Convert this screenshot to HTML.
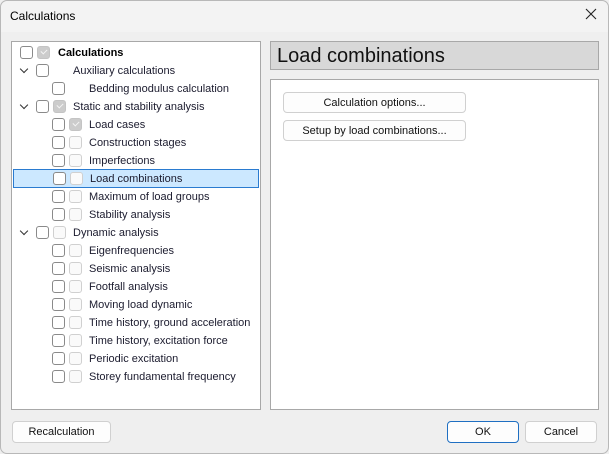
<!DOCTYPE html><html><head><style>
*{box-sizing:border-box;margin:0;padding:0}
body{width:609px;height:454px;background:#efefef;font-family:"Liberation Sans",sans-serif;font-size:11px;color:#1b1b2e;position:relative;overflow:hidden}
.frame{position:absolute;left:0;top:0;width:609px;height:454px;border:1px solid #b8b8b8;border-radius:7px}
.tb{position:absolute;left:1px;top:1px;width:607px;height:31px;background:#f3f3f3;border-radius:7px 7px 0 0}
.title{position:absolute;left:10px;top:9px;font-size:12px;color:#000}
.x{position:absolute;left:585px;top:8px}
.lp{position:absolute;left:11px;top:41px;width:250px;height:369px;background:#fff;border:1px solid #a8a8a8}
.hd{position:absolute;left:270px;top:41px;width:329px;height:29px;background:#d8d8d8;border:1px solid #a8a8a8;font-size:20px;color:#111;padding:3px 0 0 6px}
.rp{position:absolute;left:270px;top:79px;width:329px;height:331px;background:#fff;border:1px solid #a8a8a8}
.btn{position:absolute;background:#fdfdfd;border:1px solid #d0d0d0;border-radius:4px;text-align:center;font-size:11px;color:#111}
.row{position:absolute;left:0;height:18px;width:248px}
.cb{position:absolute;top:3px;width:13px;height:13px;border:1px solid #8a8a8a;border-radius:3px;background:#fff}
.cb2{position:absolute;top:3px;width:13px;height:13px;border:1px solid #d0d0d0;border-radius:3px;background:#fafafa}
.cb2.c{background:#ccc;border-color:#c4c4c4}
.cb2.c::after{content:"";position:absolute;left:3px;top:2px;width:5px;height:3px;border-left:1px solid #f4f4f4;border-bottom:1px solid #f4f4f4;transform:rotate(-45deg)}
.t{position:absolute;top:4px;white-space:nowrap}
.chev{position:absolute;top:5px;left:9px;width:6px;height:6px;border-right:1.3px solid #333;border-bottom:1.3px solid #333;transform:rotate(45deg)}
.sel{background:#cce8ff;border:1px solid #2a7bd0}
</style></head><body>
<div class="frame"></div>
<div class="tb"></div>
<div class="title">Calculations</div>
<svg class="x" width="12" height="12" viewBox="0 0 12 12"><path d="M1 1L11 11M11 1L1 11" stroke="#222" stroke-width="1.1"/></svg>
<div class="lp">
<div class="row" style="top:1px"><div class="cb" style="left:8px"></div><div class="cb2 c" style="left:25px"></div><div class="t" style="left:46px;font-weight:bold;color:#000">Calculations</div></div>
<div class="row" style="top:19px"><div class="chev"></div><div class="cb" style="left:24px"></div><div class="t" style="left:61px">Auxiliary calculations</div></div>
<div class="row" style="top:37px"><div class="cb" style="left:40px"></div><div class="t" style="left:77px">Bedding modulus calculation</div></div>
<div class="row" style="top:55px"><div class="chev"></div><div class="cb" style="left:24px"></div><div class="cb2 c" style="left:41px"></div><div class="t" style="left:61px">Static and stability analysis</div></div>
<div class="row" style="top:73px"><div class="cb" style="left:40px"></div><div class="cb2 c" style="left:57px"></div><div class="t" style="left:77px">Load cases</div></div>
<div class="row" style="top:91px"><div class="cb" style="left:40px"></div><div class="cb2" style="left:57px"></div><div class="t" style="left:77px">Construction stages</div></div>
<div class="row" style="top:109px"><div class="cb" style="left:40px"></div><div class="cb2" style="left:57px"></div><div class="t" style="left:77px">Imperfections</div></div>
<div class="row sel" style="top:127px;left:1px;width:246px;height:19px"><div class="cb" style="left:39px;top:2px"></div><div class="cb2" style="left:56px;top:2px"></div><div class="t" style="left:76px;top:3px">Load combinations</div></div>
<div class="row" style="top:145px"><div class="cb" style="left:40px"></div><div class="cb2" style="left:57px"></div><div class="t" style="left:77px">Maximum of load groups</div></div>
<div class="row" style="top:163px"><div class="cb" style="left:40px"></div><div class="cb2" style="left:57px"></div><div class="t" style="left:77px">Stability analysis</div></div>
<div class="row" style="top:181px"><div class="chev"></div><div class="cb" style="left:24px"></div><div class="cb2" style="left:41px"></div><div class="t" style="left:61px">Dynamic analysis</div></div>
<div class="row" style="top:199px"><div class="cb" style="left:40px"></div><div class="cb2" style="left:57px"></div><div class="t" style="left:77px">Eigenfrequencies</div></div>
<div class="row" style="top:217px"><div class="cb" style="left:40px"></div><div class="cb2" style="left:57px"></div><div class="t" style="left:77px">Seismic analysis</div></div>
<div class="row" style="top:235px"><div class="cb" style="left:40px"></div><div class="cb2" style="left:57px"></div><div class="t" style="left:77px">Footfall analysis</div></div>
<div class="row" style="top:253px"><div class="cb" style="left:40px"></div><div class="cb2" style="left:57px"></div><div class="t" style="left:77px">Moving load dynamic</div></div>
<div class="row" style="top:271px"><div class="cb" style="left:40px"></div><div class="cb2" style="left:57px"></div><div class="t" style="left:77px">Time history, ground acceleration</div></div>
<div class="row" style="top:289px"><div class="cb" style="left:40px"></div><div class="cb2" style="left:57px"></div><div class="t" style="left:77px">Time history, excitation force</div></div>
<div class="row" style="top:307px"><div class="cb" style="left:40px"></div><div class="cb2" style="left:57px"></div><div class="t" style="left:77px">Periodic excitation</div></div>
<div class="row" style="top:325px"><div class="cb" style="left:40px"></div><div class="cb2" style="left:57px"></div><div class="t" style="left:77px">Storey fundamental frequency</div></div>
</div>
<div class="hd">Load combinations</div>
<div class="rp"></div>
<div class="btn" style="left:283px;top:92px;width:183px;height:21px;line-height:20px">Calculation options...</div>
<div class="btn" style="left:283px;top:120px;width:183px;height:21px;line-height:20px">Setup by load combinations...</div>
<div class="btn" style="left:12px;top:421px;width:99px;height:22px;line-height:21px">Recalculation</div>
<div class="btn" style="left:447px;top:421px;width:72px;height:22px;line-height:21px;border-color:#1f6fc2">OK</div>
<div class="btn" style="left:525px;top:421px;width:72px;height:22px;line-height:21px">Cancel</div>
</body></html>
